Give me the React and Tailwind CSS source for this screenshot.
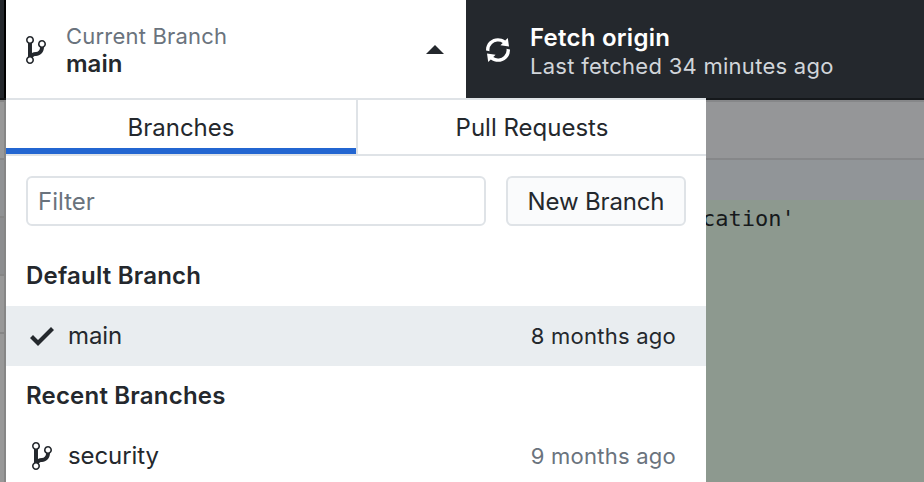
const icons = {
  branch: {
    width: 10,
    path: 'M10 5c0-1.11-.89-2-2-2a1.993 1.993 0 0 0-1 3.72v.3c-.02.52-.23.98-.63 1.38-.4.4-.86.61-1.38.63-.83.02-1.48.16-2 .45V4.72a1.993 1.993 0 0 0-1-3.72C.88 1 0 1.89 0 3a2 2 0 0 0 1 1.72v6.56c-.59.35-1 .99-1 1.72 0 1.11.89 2 2 2 1.11 0 2-.89 2-2 0-.53-.2-1-.53-1.36.09-.06.48-.41.59-.47.25-.11.56-.17.94-.17 1.05-.05 1.95-.45 2.75-1.25S8.95 7.77 9 6.73h-.02C9.59 6.37 10 5.73 10 5zM2 1.8c.66 0 1.2.55 1.2 1.2 0 .65-.55 1.2-1.2 1.2C1.35 4.2.8 3.65.8 3c0-.65.55-1.2 1.2-1.2zm0 12.41c-.66 0-1.2-.55-1.2-1.2 0-.65.55-1.2 1.2-1.2.65 0 1.2.55 1.2 1.2 0 .65-.55 1.2-1.2 1.2zm6-8c-.66 0-1.2-.55-1.2-1.2 0-.65.55-1.2 1.2-1.2.65 0 1.2.55 1.2 1.2 0 .65-.55 1.2-1.2 1.2z',
  },
  sync: {
    width: 12,
    path: 'M10.24 7.4a4.15 4.15 0 0 1-1.2 3.6 4.346 4.346 0 0 1-5.41.54L4.8 10.4.5 9.8l.6 4.2 1.31-1.26c2.36 1.74 5.7 1.57 7.84-.54a5.876 5.876 0 0 0 1.74-4.46l-1.75-.34zM2.96 5a4.346 4.346 0 0 1 5.41-.54L7.2 5.6l4.3.6-.6-4.2-1.31 1.26c-2.36-1.74-5.7-1.57-7.85.54C.5 5.03-.06 6.65.01 8.26l1.75.35A4.17 4.17 0 0 1 2.96 5z',
  },
  check: { width: 12, path: 'M12 5l-8 8-4-4 1.5-1.5L4 10l6.5-6.5L12 5z' },
}

const Icon = ({ name }) => {
  const { width, path } = icons[name]
  return (
    <svg viewBox={`0 0 ${width} 16`} width={width * 2} height={32} fill="currentColor" className="shrink-0">
      <path d={path} />
    </svg>
  )
}

const BranchRow = ({ icon, name, date, selected }) => (
  <div className={`flex h-[60px] items-center pl-5 pr-[30px] ${selected ? 'bg-[#e9edf0]' : ''}`}>
    <div className="flex w-8 shrink-0 justify-center">
      <Icon name={icon} />
    </div>
    <span className="ml-2.5 flex-1 text-2xl tracking-[-0.1px]">{name}</span>
    <span className={`text-[22px] tracking-[0.25px] ${selected ? '' : 'text-[#6a737d]'}`}>{date}</span>
  </div>
)

const SectionTitle = ({ children }) => (
  <h2 className="h-[60px] px-5 text-2xl font-semibold leading-[60px] tracking-[0.2px]">{children}</h2>
)

const Toolbar = () => (
  <div className="flex h-[98px] shrink-0 bg-[#24282d]">
    <div className="w-1.5 shrink-0 border-r-2 border-black" />
    <button className="flex w-[460px] shrink-0 items-center bg-white pl-5 pr-[22px] pt-0.5 text-left">
      <Icon name="branch" />
      <div className="ml-5 flex-1">
        <div className="text-[22px] leading-[27px] tracking-[0.2px] text-[#6a737d]">Current Branch</div>
        <div className="text-2xl font-semibold leading-[27px]">main</div>
      </div>
      <svg viewBox="0 0 18 9" width="18" height="9" fill="currentColor" className="mb-0.5">
        <path d="M9 0l9 9H0z" />
      </svg>
    </button>
    <button className="flex flex-1 items-center pl-5 pt-0.5 text-left text-white">
      <Icon name="sync" />
      <div className="ml-5 pt-1">
        <div className="text-2xl font-semibold leading-[28px] tracking-[0.25px]">Fetch origin</div>
        <div className="text-[22px] leading-[28px] tracking-[0.27px] text-[#d1d5da]">Last fetched 34 minutes ago</div>
      </div>
    </button>
  </div>
)

// Sliver of the changes list that stays visible left of the foldout
const Sidebar = () => (
  <div className="flex w-1.5 shrink-0 flex-col border-r-2 border-[#868686] bg-[#989898]">
    <div className="-mr-0.5 h-0.5 bg-[#141618]" />
    <div className="h-[60px] border-y-2 border-[#868686]" />
    <div className="h-[58px] border-b-2 border-[#868686] bg-[#909294]" />
    <div className="h-[58px] border-b-2 border-[#868686] bg-[#8c8d8f]" />
    <div className="h-[58px] border-b-2 border-[#868686]" />
  </div>
)

const BranchFoldout = () => (
  <div className="z-10 flex w-[700px] shrink-0 flex-col border-t-2 border-[#dfe3e7] bg-white">
    <div className="flex h-14 shrink-0 border-b-2 border-[#dfe3e7] text-2xl">
      <button className="flex w-[352px] border-r-2 border-[#dfe3e7]">
        <div className="h-[54px] flex-1 border-b-[6px] border-[#2366d1] pt-1.5 leading-[44px]">Branches</div>
      </button>
      <button className="flex-1 pt-1.5 leading-[44px]">
        <div className="h-12">Pull Requests</div>
      </button>
    </div>
    <div className="flex gap-5 px-5 pt-5">
      <input
        placeholder="Filter"
        className="h-[50px] w-[460px] rounded-md border-2 border-[#dfe3e7] px-2.5 text-2xl outline-none placeholder:text-[#6a737d]"
      />
      <button className="h-[50px] w-[180px] rounded-md border-2 border-[#dfe3e7] bg-[#fafbfc] pt-0.5 text-2xl tracking-[-0.15px]">
        New Branch
      </button>
    </div>
    <div className="mt-5">
      <SectionTitle>Default Branch</SectionTitle>
      <BranchRow icon="check" name="main" date="8 months ago" selected />
      <SectionTitle>Recent Branches</SectionTitle>
      <BranchRow icon="branch" name="security" date="9 months ago" />
    </div>
  </div>
)

const DiffView = () => (
  <div className="flex flex-1 flex-col">
    <div className="h-0.5 bg-[#15181b]" />
    <div className="h-[60px] border-y-2 border-[#868789] bg-[#959698]" />
    <div className="h-10 bg-[#919598]" />
    <div className="-ml-1 flex-1 bg-[#8d998f] pt-px font-['DejaVu_Sans_Mono',monospace] text-[22px] leading-9 text-[#16191c]">
      cation'
    </div>
  </div>
)

export default function App() {
  return (
    <div className="flex h-[482px] w-[924px] flex-col overflow-hidden font-['Inter',sans-serif] text-[#24282d]">
      <Toolbar />
      <div className="flex min-h-0 flex-1">
        <Sidebar />
        <BranchFoldout />
        <DiffView />
      </div>
    </div>
  )
}
